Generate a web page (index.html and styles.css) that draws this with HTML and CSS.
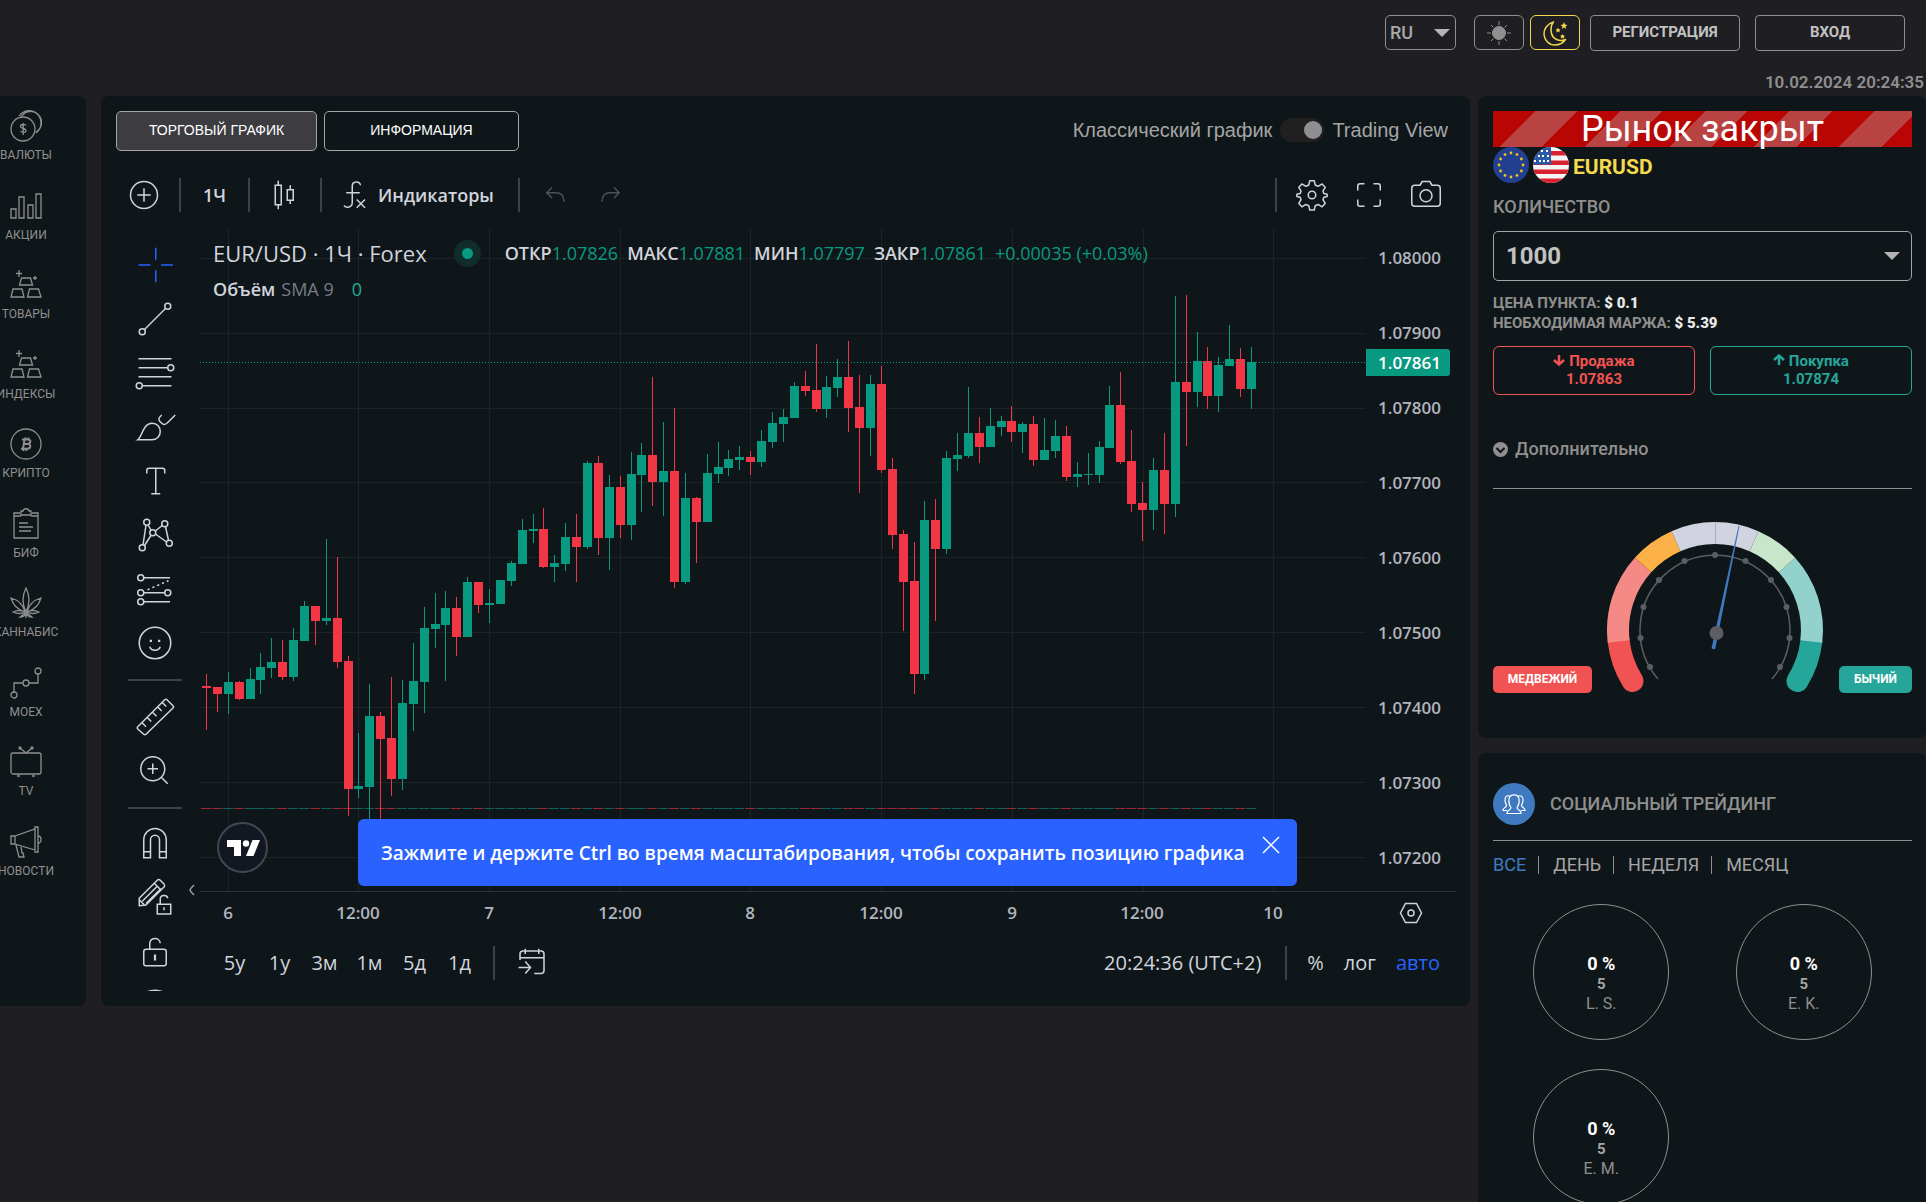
FILE: index.html
```html
<!DOCTYPE html>
<html lang="ru">
<head>
<meta charset="utf-8">
<meta name="viewport" content="width=device-width, initial-scale=1">
<title>EURUSD — торговый график</title>
<link rel="stylesheet" href="styles.css">
</head>
<body>
<header class="topbar">
  <div class="topbar-actions">
    <div class="lang"><select class="lang-select" aria-label="Язык"><option>RU</option><option>EN</option></select></div>
    <div class="theme">
      <button class="theme-btn" type="button" aria-label="Светлая тема">
        <svg width="26" height="26" viewBox="0 0 26 26" fill="none" stroke="currentColor" stroke-width="1"><circle cx="13" cy="13" r="6.500" fill="currentColor"/><path d="M13 1v4M13 21v4M1 13h4M21 13h4M5 5l2.500 2.500M18.500 18.500L21 21M5 21l2.500-2.500M18.500 7.500L21 5"/></svg>
      </button>
      <button class="theme-btn theme-btn-active" type="button" aria-label="Тёмная тема">
        <svg width="26" height="26" viewBox="0 0 26 26" fill="none" stroke="currentColor" stroke-width="1.500"><path d="M11.500 2C5 4 1.500 9 2 14.500 2.500 20.500 7 25 13 25c4.500 0 8-2 10.500-5.500C17 22 11 19 9.500 13.500 8.500 9 9 5 11.500 2z" stroke-linejoin="round"/><path d="M22 2l1 2.500 2.500.5-2 1.500.5 2.500-2-1.500L20 9l.5-2.500-2-1.500 2.500-.5zM16 7.500l.8 1.700 1.700.3-1.200 1.200.3 1.800-1.600-1-1.600 1 .3-1.800-1.200-1.200 1.700-.3zM20.500 14l.8 1.500 1.700.3-1.200 1.200.2 1.700-1.500-.9-1.500.9.2-1.700-1.200-1.200 1.700-.3z" fill="currentColor" stroke="none"/></svg>
      </button>
    </div>
    <button class="auth-btn" type="button">РЕГИСТРАЦИЯ</button>
    <button class="auth-btn auth-login" type="button">ВХОД</button>
  </div>
  <time class="clock">10.02.2024 20:24:35</time>
</header>

<div class="layout">
  <nav class="markets" aria-label="Рынки">
    <ul class="market-list">
      <li><a class="market" href="#fx"><svg class="market-icon" viewBox="0 0 32 32"><circle cx="13" cy="19" r="12"/><path d="M11 7a11 11 0 1 1 15 15M9 6A12 12 0 0 1 31 13c0 4-1.500 7.500-5 10"/><path d="M16 15.500c-1-1.500-5.500-1.500-5.500 1s5.500 1.500 5.500 4-4.500 2.500-5.500.5M13.200 13v12"/></svg>ВАЛЮТЫ</a></li>
      <li><a class="market" href="#stocks"><svg class="market-icon" viewBox="0 0 32 32"><path d="M1 19h5v9H1zM9 7h5v21H9zM18 15h5v13h-5zM26 4h5v24h-5z"/></svg>АКЦИИ</a></li>
      <li><a class="market" href="#goods"><svg class="market-icon" viewBox="0 0 32 32"><path d="M11.500 9h9l2 7h-13zM3 20h9l2 8H1zM19.500 20h9l2.500 8H17.500zM9 1v7M6 4.500h6M25 7v4M23 9h4"/></svg>ТОВАРЫ</a></li>
      <li><a class="market" href="#indices"><svg class="market-icon" viewBox="0 0 32 32"><path d="M11.500 9h9l2 7h-13zM3 20h9l2 8H1zM19.500 20h9l2.500 8H17.500zM9 1v7M6 4.500h6M25 7v4M23 9h4"/></svg>ИНДЕКСЫ</a></li>
      <li><a class="market" href="#crypto"><svg class="market-icon" viewBox="0 0 32 32"><circle cx="16" cy="16" r="15"/><path stroke-width="2" d="M12 11.500h6c3.500 0 3 4-.5 4.300 4 .2 3.500 5-.5 5h-6M14.500 11.500L13 20.800M14 16h4M15.500 9.500l-.3 2M18.500 9.500l-.3 2M13.500 21l-.3 2M16.500 21l-.3 2"/></svg>КРИПТО</a></li>
      <li><a class="market" href="#etf"><svg class="market-icon" viewBox="0 0 32 32"><path d="M10 5H4v25h24V5h-6M4 8h7M21 8h7M11 3h2c0-3 6-3 6 0h2v4H11zM9 15h9M9 19h14M9 23h12"/></svg>БИФ</a></li>
      <li><a class="market" href="#cannabis"><svg class="market-icon" viewBox="0 0 32 32"><path d="M16 1c-4 8-4 16 0 24 4-8 4-16 0-24zM1 11c2 7 7 12 14 14-2-8-7-12-14-14zM31 11c-2 7-7 12-14 14 2-8 7-12 14-14zM15 25c-4-2-8-2-12 0 4 2 8 2 12 0zM17 25c4-2 8-2 12 0-4 2-8 2-12 0zM15 26l-5 4c3 0 5-1 6-4 1 3 3 4 6 4l-5-4M16 26v5"/></svg>КАННАБИС</a></li>
      <li><a class="market" href="#moex"><svg class="market-icon" viewBox="0 0 32 32"><circle cx="4" cy="28" r="3"/><circle cx="16" cy="16" r="3"/><circle cx="28" cy="4" r="3"/><path d="M4 25v-9h9M19 16h9V7"/></svg>MOEX</a></li>
      <li><a class="market" href="#tv"><svg class="market-icon" viewBox="0 0 32 32"><rect x="1" y="7" width="30" height="21" rx="2"/><path d="M10 2l6 5 6-5M7 30h3M22 30h3"/><circle cx="10" cy="2" r="1"/><circle cx="22" cy="2" r="1"/></svg>TV</a></li>
      <li><a class="market" href="#news"><svg class="market-icon" viewBox="0 0 32 32"><path d="M5 10L25 3v21L5 18zM25 1h3v25h-3zM28 10c4 0 4 7 0 7M1 10h4v8H1zM6 19l3 12h5l-1-4h-1l-1-6"/></svg>НОВОСТИ</a></li>
    </ul>
  </nav>

  <main class="trade">
    <div class="trade-head">
      <div class="view-tabs">
        <button class="view-tab view-tab-active" type="button">ТОРГОВЫЙ ГРАФИК</button>
        <button class="view-tab" type="button">ИНФОРМАЦИЯ</button>
      </div>
      <label class="chart-mode">Классический график <input class="switch" type="checkbox" checked> Trading View</label>
    </div>

    <div class="chart-toolbar">
      <button class="tool-btn" type="button" aria-label="Сравнить"><svg class="icon" viewBox="0 0 28 28"><circle cx="14" cy="14" r="9"/><path d="M14 9.500v9M9.500 14h9"/></svg></button>
      <span class="divider"></span>
      <button class="text-btn interval" type="button">1Ч</button>
      <span class="divider"></span>
      <button class="tool-btn" type="button" aria-label="Свечи"><svg class="icon" viewBox="0 0 28 28"><path d="M7.500 7.500h4v13h-4zM9.500 4.500v3M9.500 20.500v3M15.500 10.500h4v7h-4zM17.500 7.500v3M17.500 17.500v2.500"/></svg></button>
      <span class="divider"></span>
      <button class="text-btn indicators" type="button"><svg class="icon" viewBox="0 0 28 28"><path d="M19 7.500c-.5-3-5.500-3-5.500.5v11c0 3.500-4 4-5.500 2M9.500 12.500h9M16.500 17l5.500 5.500M22 17l-5.500 5.500"/></svg>Индикаторы</button>
      <span class="divider"></span>
      <button class="tool-btn history" type="button" aria-label="Отменить" disabled><svg class="icon" viewBox="0 0 28 28"><path d="M12 9l-3.500 3.500L12 16M8.500 12.500h6c3.500 0 5.500 2 5.500 6"/></svg></button>
      <button class="tool-btn history" type="button" aria-label="Повторить" disabled><svg class="icon" viewBox="0 0 28 28"><path d="M16 9l3.500 3.500L16 16M19.500 12.500h-6c-3.500 0-5.500 2-5.500 6"/></svg></button>
      <span class="divider divider-end"></span>
      <button class="tool-btn wide" type="button" aria-label="Настройки"><svg class="icon" viewBox="0 0 28 28"><circle cx="14" cy="14" r="2.500"/><path stroke-linejoin="round" d="M12.500 4.500h3l.6 2.800 2 .9 2.600-1.600 2.100 2.300-1.500 2.500.6 1.600 2.200.5v1.500l-2.200.5-.6 1.600 1.500 2.500-2.100 2.300-2.600-1.600-2 .9-.6 2.800h-3l-.6-2.800-2-.9-2.600 1.600-2.100-2.300 1.500-2.500-.6-1.600-2.200-.5v-1.500l2.200-.5.6-1.600-1.500-2.500 2.100-2.300 2.600 1.600 2-.9z"/></svg></button>
      <button class="tool-btn wide" type="button" aria-label="На весь экран"><svg class="icon" viewBox="0 0 28 28"><path d="M11 6.500H8A1.500 1.500 0 0 0 6.500 8v3M17 6.500h3A1.500 1.500 0 0 1 21.500 8v3M11 21.500H8A1.500 1.500 0 0 1 6.500 20v-3M17 21.500h3a1.500 1.500 0 0 0 1.500-1.500v-3"/></svg></button>
      <button class="tool-btn wide" type="button" aria-label="Снимок"><svg class="icon" viewBox="0 0 28 28"><circle cx="14" cy="14.500" r="4"/><path stroke-linejoin="round" d="M11.500 5h5l1.500 2.500h3.500a2 2 0 0 1 2 2v10a2 2 0 0 1-2 2h-15a2 2 0 0 1-2-2v-10a2 2 0 0 1 2-2H10z"/></svg></button>
    </div>

    <div class="chart-body">
      <div class="draw-tools">
        <button class="draw-btn draw-active" type="button" aria-label="Курсор"><svg class="icon" viewBox="0 0 28 28"><path d="M14.500 2.500v8M14.500 17.500v8M3 14h8M18 14h8"/></svg></button>
        <button class="draw-btn" type="button" aria-label="Линия тренда"><svg class="icon" viewBox="0 0 28 28"><circle cx="5.500" cy="22.500" r="2"/><circle cx="22.500" cy="5.500" r="2"/><path d="M7 21L21 7"/></svg></button>
        <button class="draw-btn" type="button" aria-label="Коррекция"><svg class="icon" viewBox="0 0 28 28"><path d="M3 4.500h22M3 10.500h19.500M3 16.500h22M5.500 22.500H25"/><circle cx="24.500" cy="10.500" r="2"/><circle cx="3.500" cy="22.500" r="2"/></svg></button>
        <button class="draw-btn" type="button" aria-label="Кисть"><svg class="icon" viewBox="0 0 28 28"><path d="M2.500 22.500c3-2 3.500-11 9.500-11 3.500 0 5.500 2.500 5.500 5.500s-2 5.500-5.500 5.500zM18.500 6c-3 2.500-2 4 0 5.500 1.500 1.500 2.500 1 4-.5L27.500 6"/></svg></button>
        <button class="draw-btn" type="button" aria-label="Текст"><svg class="icon" viewBox="0 0 28 28"><path d="M8.500 9V7c0-1 .5-1.500 1.500-1.500h9c1 0 1.500.5 1.500 1.500v2M14.500 5.500v17M11.500 22.500h6"/></svg></button>
        <button class="draw-btn" type="button" aria-label="Паттерны"><svg class="icon" viewBox="0 0 28 28"><circle cx="8.500" cy="5.500" r="2"/><circle cx="20.500" cy="6.500" r="2"/><circle cx="12.500" cy="12.500" r="2"/><circle cx="23.500" cy="19.500" r="2"/><circle cx="5.500" cy="22.500" r="2"/><path d="M6 20.500L8 7.500M9.500 7.500l2 3.500M14 11.500l5-4M21 8.500l2 9M14.500 13.500l7 5M7 21l4.500-7"/></svg></button>
        <button class="draw-btn" type="button" aria-label="Прогноз"><svg class="icon" viewBox="0 0 28 28"><path d="M6.500 6.500H24M6.500 16.500h14M6.500 22.500H24"/><path d="M9 14.500l14-6" stroke-dasharray="1.500 2"/><circle cx="4.500" cy="6.500" r="2"/><circle cx="4.500" cy="16.500" r="2"/><circle cx="22.500" cy="16.500" r="2"/><circle cx="4.500" cy="22.500" r="2"/></svg></button>
        <button class="draw-btn" type="button" aria-label="Эмодзи"><svg class="icon" viewBox="0 0 28 28"><circle cx="14" cy="14" r="10.500"/><path d="M10.500 16.500c1 3 6 3 7 0"/><path d="M10.500 12.500h1.500M16 12.500h1.500" stroke-width="1.500"/></svg></button>
        <hr class="draw-sep">
        <button class="draw-btn" type="button" aria-label="Измерить"><svg class="icon" viewBox="0 0 28 28"><path stroke-linejoin="round" d="M2.500 20.500l18-18c.5-.5 1-.5 1.500 0L26 6.500c.5.5.5 1 0 1.500L8 25.500c-.5.500-1 .5-1.500 0L2.500 22c-.5-.5-.5-1 0-1.500zM5.500 18l2.500 2.500M9 14.500l2.500 2.500M12.500 11l2.500 2.500M16 7.500l2.500 2.500M19 4.500L21.500 7"/></svg></button>
        <button class="draw-btn" type="button" aria-label="Увеличить"><svg class="icon" viewBox="0 0 28 28"><circle cx="12.500" cy="12.500" r="8"/><path d="M18.500 18.500l4 4M12.500 9v7M9 12.500h7"/></svg></button>
        <hr class="draw-sep">
        <button class="draw-btn" type="button" aria-label="Магнит"><svg class="icon" viewBox="0 0 28 28"><path d="M6.500 22.500v-12a7.500 7.500 0 0 1 15 0v12h-4.500v-12a3 3 0 0 0-6 0v12zM6.500 18.500h4.500M17 18.500h4.500"/></svg></button>
        <button class="draw-btn" type="button" aria-label="Режим рисования"><svg class="icon" viewBox="0 0 28 28"><path stroke-linejoin="round" d="M3.500 18.500v-5l12-12c.5-.5 1.500-.5 2 0l2.500 2.500c.5.500.5 1.500 0 2l-12 12zM5.500 15.500l10-10M8 17L18 7M13.500 3.500l4.500 4.500M3.500 14.500l4 4"/><path d="M15.500 17.500h9v6.500h-9zM17.500 17.500v-3.500c0-3 4.500-3 5-.5M20 19.500v2"/></svg></button>
        <button class="draw-btn" type="button" aria-label="Заблокировать"><svg class="icon" viewBox="0 0 28 28"><rect x="6.500" y="11.500" width="15" height="11" rx="1.500"/><path d="M10.500 11.500v-3.500c0-4.500 6.500-5 7-.5"/><path stroke-width="1.500" d="M14 15v4"/></svg></button>
        <button class="draw-btn" type="button" aria-label="Скрыть"><svg class="icon" viewBox="0 0 28 28"><path d="M3 9.500c4-9 18-9 22 0-4 9-18 9-22 0z"/><circle cx="14" cy="9.500" r="3"/></svg></button>
      </div>

      <div class="chart-pane">
        <div class="plot">
          <svg class="plot-svg" viewBox="200 229 1256 701">
            <path class="grid" d="M200 258.500h1166M200 333.500h1166M200 408.500h1166M200 482.500h1166M200 557.500h1166M200 632.500h1166M200 707.500h1166M200 782.500h1166M200 857.500h1166M228.500 229v662M358.500 229v662M489.500 229v662M620.500 229v662M750.500 229v662M881.500 229v662M1012.500 229v662M1143.500 229v662M1273.500 229v662"/>
            <path class="axis" d="M200 891.500h1256"/>
            <g id="candles" shape-rendering="crispEdges"></g>
            <path class="last-price" d="M200 362.500h1166"/>
            <g class="price-labels">
              <text x="1378" y="264">1.08000</text><text x="1378" y="339">1.07900</text><text x="1378" y="414">1.07800</text><text x="1378" y="489">1.07700</text><text x="1378" y="564">1.07600</text><text x="1378" y="639">1.07500</text><text x="1378" y="714">1.07400</text><text x="1378" y="789">1.07300</text><text x="1378" y="864">1.07200</text>
            </g>
            <path class="price-tag" d="M1366 349h81a3 3 0 0 1 3 3v21a3 3 0 0 1-3 3h-81z"/>
            <text class="price-tag-text" x="1378" y="369">1.07861</text>
            <g class="time-labels">
              <text x="228" y="919">6</text><text x="358" y="919">12:00</text><text x="489" y="919">7</text><text x="620" y="919">12:00</text><text x="750" y="919">8</text><text x="881" y="919">12:00</text><text x="1012" y="919">9</text><text x="1142" y="919">12:00</text><text x="1273" y="919">10</text>
            </g>
            <g class="axis-gear"><path d="M1405.500 903.500h11l5 9.500-5 9.500h-11l-5-9.500z"/><circle cx="1411" cy="913" r="3"/></g>
          </svg>
          <div class="legend">
            <div class="legend-row">
              <span class="legend-title">EUR/USD · 1Ч · Forex</span>
              <span class="status"></span>
              <span class="ohlc">ОТКР<b>1.07826</b></span>
              <span class="ohlc">МАКС<b>1.07881</b></span>
              <span class="ohlc">МИН<b>1.07797</b></span>
              <span class="ohlc">ЗАКР<b>1.07861</b></span>
              <span class="ohlc"><b>+0.00035 (+0.03%)</b></span>
            </div>
            <div class="legend-row legend-volume"><span>Объём</span><span class="muted">SMA 9</span><span class="volume">0</span></div>
          </div>
          <a class="tv-logo" href="#tradingview" aria-label="TradingView"><svg width="34" height="18" viewBox="0 0 34 18" fill="#fff"><path d="M1 1h14v16H8V8H1zM26.500 1H34l-6.500 16H20z"/><circle cx="20" cy="4.500" r="3.200"/></svg></a>
          <div class="toast" role="status">
            <span>Зажмите и держите Ctrl во время масштабирования, чтобы сохранить позицию графика</span>
            <button class="toast-close" type="button" aria-label="Закрыть"><svg width="18" height="18" viewBox="0 0 18 18" fill="none" stroke="#fff" stroke-width="1.500"><path d="M1 1l16 16M17 1L1 17"/></svg></button>
          </div>
          <button class="collapse" type="button" aria-label="Скрыть панель"><svg width="6" height="12" viewBox="0 0 6 12" fill="none" stroke="#9aa3aa" stroke-width="1.500"><path d="M5 1Q1 5 1 6t4 5"/></svg></button>
        </div>
        <div class="chart-footer">
          <button class="range" type="button">5y</button>
          <button class="range" type="button">1y</button>
          <button class="range" type="button">3м</button>
          <button class="range" type="button">1м</button>
          <button class="range" type="button">5д</button>
          <button class="range" type="button">1д</button>
          <span class="divider"></span>
          <button class="tool-btn" type="button" aria-label="Перейти к дате"><svg class="icon" viewBox="0 0 28 28"><path d="M6 12V8c0-1 .5-2 2-2h12c1.500 0 2 1 2 2v11c0 1-.5 2-2 2h-4.500M6 10.500h16M9.500 4.500V8M18.500 4.500V8M5 17h7.500M9.500 13l3.500 4-3.500 4"/></svg></button>
          <span class="footer-time">20:24:36 (UTC+2)</span>
          <span class="divider"></span>
          <button class="scale" type="button">%</button>
          <button class="scale" type="button">лог</button>
          <button class="scale scale-active" type="button">авто</button>
        </div>
      </div>
    </div>
  </main>

  <aside class="side">
    <section class="card order">
      <div class="closed">Рынок закрыт</div>
      <div class="symbol">
        <svg width="36" height="36" viewBox="0 0 36 36" fill="#f2c71c"><circle cx="18" cy="18" r="18" fill="#233f8f"/><circle cx="18" cy="6" r="1.400"/><circle cx="24" cy="7.600" r="1.400"/><circle cx="28.400" cy="12" r="1.400"/><circle cx="30" cy="18" r="1.400"/><circle cx="28.400" cy="24" r="1.400"/><circle cx="24" cy="28.400" r="1.400"/><circle cx="18" cy="30" r="1.400"/><circle cx="12" cy="28.400" r="1.400"/><circle cx="7.600" cy="24" r="1.400"/><circle cx="6" cy="18" r="1.400"/><circle cx="7.600" cy="12" r="1.400"/><circle cx="12" cy="7.600" r="1.400"/></svg>
        <svg width="36" height="36" viewBox="0 0 36 36"><clipPath id="round"><circle cx="18" cy="18" r="18"/></clipPath><g clip-path="url(#round)"><path fill="#f4f4f4" d="M0 0h36v36H0z"/><path fill="#d9202e" d="M0 4h36v4.500H0zM0 13.500h36V18H0zM0 22.500h36V27H0zM0 31.500h36V36H0z"/><path fill="#275aa8" d="M0 0h18v17.500H0z"/><path fill="#fff" d="M8 3h2v2H8zM13 3h2v2h-2zM5 8h2v2H5zM9 8h2v2H9zM14 8h2v2h-2zM1 13h2v2H1zM6 13h2v2H6zM10 13h2v2h-2zM14 13h2v2h-2z"/></g></svg>
        <span class="symbol-name">EURUSD</span>
      </div>
      <label class="field-label" for="amount">КОЛИЧЕСТВО</label>
      <div class="amount"><select class="amount-select" id="amount"><option>1000</option><option>10000</option></select></div>
      <p class="terms">ЦЕНА ПУНКТА: <b>$ 0.1</b><br>НЕОБХОДИМАЯ МАРЖА: <b>$ 5.39</b></p>
      <div class="deal">
        <button class="deal-btn sell" type="button"><span><svg class="arrow" viewBox="0 0 12 12"><path d="M6 1v9M1 6l5 4.500L11 6"/></svg> Продажа</span><span>1.07863</span></button>
        <button class="deal-btn buy" type="button"><span><svg class="arrow" viewBox="0 0 12 12"><path d="M6 11V2M1 6l5-4.500L11 6"/></svg> Покупка</span><span>1.07874</span></button>
      </div>
      <button class="more" type="button"><svg width="15" height="15" viewBox="0 0 15 15"><circle cx="7.500" cy="7.500" r="7.500" fill="currentColor"/><path d="M3.500 6l4 4 4-4" fill="none" stroke="#0f1619" stroke-width="2"/></svg>Дополнительно</button>
      <div class="mood">
        <span class="badge bear">МЕДВЕЖИЙ</span>
        <svg class="gauge" width="218" height="172" viewBox="-108 -109 218 172" fill="none">
          <g stroke-width="22">
            <path stroke="#f15353" stroke-linecap="round" d="M-82.500 51A97 97 0 0 1 -96.300 11.500"/>
            <path stroke="#26a69a" stroke-linecap="round" d="M82.500 51A97 97 0 0 0 96.300 11.500"/>
            <path stroke="#f58986" d="M-96.300 11.500A97 97 0 0 1 -72 -65"/>
            <path stroke="#93d2cc" d="M96.300 11.500A97 97 0 0 0 72 -65"/>
            <path stroke="#fbb048" d="M-72 -65A97 97 0 0 1 -39 -88.800"/>
            <path stroke="#c8e6c9" d="M72 -65A97 97 0 0 0 39 -88.800"/>
            <path stroke="#d1d4e0" d="M-39 -88.800A97 97 0 0 1 39 -88.800"/>
          </g>
          <path stroke="#a9abb5" d="M.5 -108v22"/>
          <path stroke="#5d5e63" stroke-width="1.500" d="M-57 49A75 75 0 1 1 57 49"/>
          <g fill="#5d5e63"><circle cx="-65" cy="37" r="3"/><circle cx="-74.500" cy="8" r="3"/><circle cx="-71.500" cy="-23" r="3"/><circle cx="-56" cy="-50" r="3"/><circle cx="-30.500" cy="-69" r="3"/><circle cx="0" cy="-75" r="3"/><circle cx="30.500" cy="-69" r="3"/><circle cx="56" cy="-50" r="3"/><circle cx="71.500" cy="-23" r="3"/><circle cx="74.500" cy="8" r="3"/><circle cx="65" cy="37" r="3"/></g>
          <path fill="#3f7ac1" d="M-3.500 18.500l3.600.8L24.500 -104l-1-.2z"/>
          <circle cx="1.500" cy="3" r="7" fill="#5d5e63"/>
        </svg>
        <span class="badge bull">БЫЧИЙ</span>
      </div>
    </section>

    <section class="card social">
      <h2 class="social-title"><span class="social-icon"><svg width="24" height="22" viewBox="0 0 24 22" fill="none" stroke="#fff" stroke-width="1.200"><path d="M5 20.500c-.5-4 4-3 4-6C7 12 6.500 10 7 6c.8-5.500 9.200-5.500 10 0 .5 4 0 6-2 8.500 0 3 4.500 2 4 6zM8 3C4.500 2 2.500 4 3 8c.2 2 1 3 1.500 4 .5 3-3.500 2-3.500 5.500h4M16 3c3.500-1 5.500 1 5 5-.2 2-1 3-1.500 4-.5 3 3.500 2 3.500 5.500h-4"/></svg></span>СОЦИАЛЬНЫЙ ТРЕЙДИНГ</h2>
      <div class="periods">
        <a class="period period-active" href="#all">ВСЕ</a>
        <a class="period" href="#day">ДЕНЬ</a>
        <a class="period" href="#week">НЕДЕЛЯ</a>
        <a class="period" href="#month">МЕСЯЦ</a>
      </div>
      <div class="traders">
        <div class="trader"><strong class="profit">0 %</strong><b class="count">5</b><span>L. S.</span></div>
        <div class="trader"><strong class="profit">0 %</strong><b class="count">5</b><span>E. K.</span></div>
        <div class="trader"><strong class="profit">0 %</strong><b class="count">5</b><span>E. M.</span></div>
      </div>
    </section>
  </aside>
</div>
<script src="chart.js"></script>
</body>
</html>
```

FILE: styles.css
```css
:root {
  --page: #1e1e23;
  --panel: #0f1619;
  --line: #8f8f8f;
  --muted: #8f8f8f;
  --text: #c2c2c2;
  --up: #089981;
  --down: #f23645;
  --chart-text: #d1d4dc;
  --chart-font: "Trebuchet MS", "Open Sans", "Noto Sans", sans-serif;
}

* { box-sizing: border-box; }

html { scrollbar-width: none; }

body {
  margin: 0;
  background: var(--page);
  color: var(--muted);
  font: 16px/20px Roboto, sans-serif;
  overflow-x: hidden;
}

button, select {
  margin: 0;
  padding: 0;
  border: 0;
  background: none;
  color: inherit;
  font: inherit;
}

a { color: inherit; text-decoration: none; }
svg { display: block; flex: none; }

/* Top bar */
.topbar { height: 96px; padding-top: 15px; }
.topbar-actions { display: flex; justify-content: flex-end; padding-right: 21px; height: 36px; align-items: flex-start; }

.lang { position: relative; width: 71px; margin-right: 18px; }
.lang-select {
  appearance: none;
  width: 100%;
  height: 35px;
  padding: 0 4px;
  border: 1px solid var(--line);
  border-radius: 5px;
  color: #a9a9a9;
  font-size: 18px;
  font-weight: 500;
}
.lang::after, .amount::after {
  content: "";
  position: absolute;
  top: 50%;
  right: 6px;
  margin-top: -4px;
  border: solid transparent;
  border-width: 8px 8px 0;
  border-top-color: #b5b5b5;
  pointer-events: none;
}

.theme { display: flex; gap: 6px; margin-right: 10px; }
.theme-btn {
  display: grid;
  place-items: center;
  width: 50px;
  height: 35px;
  border: 1px solid var(--line);
  border-radius: 6px;
}
.theme-btn-active { border-color: #f3d84c; color: #f3d84c; }

.auth-btn {
  width: 150px;
  height: 36px;
  padding-bottom: 2px;
  border: 1px solid var(--line);
  border-radius: 4px;
  color: var(--text);
  font-size: 15px;
  font-weight: 700;
}
.auth-login { margin-left: 15px; }

.clock { display: block; margin-top: 21px; padding-right: 2px; text-align: right; font-size: 17px; font-weight: 600; }

/* Page columns */
.layout { display: flex; align-items: flex-start; }

.markets {
  flex: none;
  align-self: flex-start;
  width: 86px;
  min-height: 910px;
  margin-right: 15px;
  padding-top: 14px;
  border-radius: 0 8px 8px 0;
  background: var(--panel);
  overflow: hidden;
}
.market-list {
  display: grid;
  grid-auto-rows: 1fr;
  width: 86px;
  height: 795px;
  margin: 0 0 0 -17px;
  padding: 0;
  list-style: none;
}
.market {
  display: flex;
  flex-direction: column;
  align-items: center;
  gap: 3px;
  font-size: 12px;
}
.market-icon { width: 32px; height: 32px; fill: none; stroke: currentColor; stroke-width: 1.3; }

.trade {
  flex: 1;
  min-width: 0;
  margin-right: 8px;
  padding: 15px 14px 10px 15px;
  border-radius: 8px;
  background: var(--panel);
}
.trade-head { display: flex; justify-content: space-between; align-items: flex-start; }
.view-tabs { display: flex; gap: 7px; }
.view-tab {
  width: 195px;
  height: 40px;
  padding-bottom: 2px;
  border: 1px solid #a5a5a5;
  border-radius: 5px;
  color: #fff;
  font: 14px/16px "Liberation Sans", Arial, sans-serif;
}
.view-tab-active { width: 201px; background: #3c3c41; }
.chart-mode {
  display: flex;
  align-items: center;
  gap: 8px;
  height: 38px;
  padding-right: 8px;
  color: #a5a5a5;
  font: 20px/24px "Liberation Sans", Arial, sans-serif;
}
.switch {
  appearance: none;
  display: flex;
  justify-content: flex-end;
  align-items: center;
  width: 44px;
  height: 24px;
  margin: 0;
  padding: 0 2px;
  border-radius: 12px;
  background: #211f20;
}
.switch::before { content: ""; width: 18px; height: 18px; border-radius: 50%; background: #8f8f92; }

/* Chart */
.icon { width: 42px; height: 42px; fill: none; stroke: currentColor; stroke-width: 1; }
.divider { flex: none; width: 2px; height: 34px; background: #3f424c; }

.chart-toolbar {
  display: flex;
  align-items: center;
  height: 52px;
  margin: 18px 0 8px;
  padding: 0 2px 0 7px;
  color: var(--chart-text);
  font: 600 18px/24px var(--chart-font);
}
.tool-btn { display: grid; place-items: center; flex: none; width: 42px; height: 42px; }
.tool-btn + .divider { margin-left: 14px; }
.interval { width: 67px; }
.divider + .tool-btn { margin-left: 14px; }
.indicators { display: flex; align-items: center; gap: 4px; padding: 0 24px 0 10px; }
.history { color: #4c5058; margin-right: 14px; }
.chart-toolbar .divider-end { margin: 0 0 0 auto; }
.wide { width: 57px; }
.chart-toolbar .wide { margin-left: 0; }
.chart-toolbar .divider-end + .wide { margin-left: 6px; }

.chart-body { display: grid; grid-template-columns: 78px 1fr; column-gap: 6px; }
.draw-tools { height: 762px; padding-top: 9px; overflow: hidden; color: var(--chart-text); }
.draw-btn { display: grid; place-items: center; width: 78px; height: 54px; }
.draw-active { color: #2962ff; }
.draw-sep { width: 54px; height: 2px; margin: 9px auto; border: 0; background: #3f424c; }

.chart-pane { min-width: 0; font-family: var(--chart-font); color: var(--chart-text); }
.plot { position: relative; }
.plot-svg { width: 100%; height: auto; }
.grid { stroke: #1d2427; }
.axis { stroke: #2d3236; }
.last-price { stroke: var(--up); stroke-dasharray: 1 2; }
.candle-up { fill: var(--up); }
.candle-down { fill: var(--down); }
.vol { opacity: .6; }
.price-labels, .time-labels { fill: #b2b5be; font-size: 17px; font-weight: 600; }
.time-labels { text-anchor: middle; }
.price-tag { fill: var(--up); }
.price-tag-text { fill: #fff; font-size: 17px; font-weight: 600; }
.axis-gear { fill: none; stroke: var(--chart-text); stroke-width: 1.5; }

.legend { position: absolute; top: 9px; left: 13px; font-size: 18px; font-weight: 600; line-height: 30px; }
.legend-row { display: flex; align-items: center; gap: 9px; white-space: nowrap; }
.legend-title { font-size: 22px; font-weight: 500; margin-right: 18px; }
.status { width: 27px; height: 27px; margin-right: 15px; border: 8px solid #102d2b; border-radius: 50%; background: var(--up); }
.ohlc b { font-weight: 500; color: #089981; }
.legend-volume { margin-top: 6px; gap: 6px; }
.muted { color: #787b86; font-weight: 400; }
.volume { margin-left: 12px; color: #22ab94; font-weight: 500; }

.tv-logo {
  position: absolute;
  bottom: 57px;
  left: 17px;
  display: grid;
  place-items: center;
  width: 51px;
  height: 51px;
  border: 2px solid #434651;
  border-radius: 50%;
  background: #131722;
}
.toast {
  position: absolute;
  bottom: 44px;
  left: 158px;
  display: flex;
  justify-content: space-between;
  align-items: center;
  width: 939px;
  height: 67px;
  padding: 0 17px 0 23px;
  border-radius: 6px;
  background: #2962ff;
  color: #fff;
  font-size: 19px;
  font-weight: 600;
  white-space: nowrap;
}
.toast-close { padding-bottom: 16px; }
.collapse { position: absolute; bottom: 34px; left: -11px; }

.chart-footer {
  display: flex;
  align-items: center;
  height: 66px;
  padding: 0 16px 0 12px;
  font-size: 20px;
  font-weight: 500;
}
.range { width: 45px; }
.chart-footer .range + .divider { margin-left: 11px; }
.chart-footer .tool-btn { margin-left: 16px; }
.footer-time { margin: 0 24px 0 auto; }
.scale { margin-left: 20px; }
.scale-active { color: #2962ff; }

/* Right column */
.side { flex: none; width: 448px; }
.card { padding: 15px 14px 15px 15px; border-radius: 8px; background: var(--panel); }
.order { height: 642px; }
.closed {
  height: 36px;
  background: repeating-linear-gradient(135deg, #b90504 0 30px, #b94342 30px 60px);
  color: #fff;
  font-size: 36px;
  line-height: 36px;
  text-align: center;
}
.symbol { display: flex; align-items: center; gap: 4px; height: 36px; }
.symbol-name { padding-top: 4px; color: #f5d94e; font-size: 21px; font-weight: 700; }
.field-label { display: block; margin-top: 14px; font-size: 18px; font-weight: 500; }
.amount { position: relative; margin-top: 14px; }
.amount-select {
  appearance: none;
  width: 100%;
  height: 50px;
  padding: 0 12px;
  border: 1px solid #a5a5a5;
  border-radius: 5px;
  color: var(--text);
  font-size: 24px;
  font-weight: 700;
}
.amount::after { right: 12px; }
.terms { margin: 12px 0 13px; font-size: 15px; font-weight: 700; }
.terms b { color: #e8e8e8; }
.deal { display: grid; grid-template-columns: 1fr 1fr; gap: 15px; }
.deal-btn {
  display: flex;
  flex-direction: column;
  align-items: center;
  justify-content: center;
  height: 49px;
  padding-bottom: 2px;
  border: 1px solid;
  border-radius: 6px;
  font-size: 15px;
  font-weight: 700;
  line-height: 18px;
}
.sell { color: #f15353; }
.buy { color: #26a69a; }
.arrow { display: inline-block; width: 12px; height: 12px; fill: none; stroke: currentColor; stroke-width: 2.5; }
.more {
  display: flex;
  align-items: center;
  gap: 7px;
  width: 100%;
  margin-top: 43px;
  padding-bottom: 28px;
  border-bottom: 1px solid var(--line);
  font-size: 18px;
  font-weight: 500;
  line-height: 22px;
}
.mood { display: flex; justify-content: space-between; align-items: flex-end; margin-top: 32px; }
.badge {
  width: 99px;
  border-radius: 5px;
  color: #fff;
  font-size: 12px;
  font-weight: 700;
  line-height: 27px;
  text-align: center;
}
.bear { background: #f15353; }
.bull { width: 73px; background: #26a69a; }
.gauge { margin: 0 -20px; }

.social { margin-top: 15px; padding-top: 30px; }
.social-title {
  display: flex;
  align-items: center;
  gap: 15px;
  margin: 0;
  padding-bottom: 15px;
  border-bottom: 1px solid var(--line);
  font-size: 18px;
  font-weight: 500;
}
.social-icon { display: grid; place-items: center; width: 42px; height: 42px; border-radius: 50%; background: #3f7ac1; }
.periods { display: flex; margin-top: 15px; color: #a5a5a5; font-size: 18px; line-height: 18px; }
.period + .period { margin-left: 12px; padding-left: 14px; border-left: 1px solid var(--line); }
.period-active { color: #3f7ac1; }
.traders {
  display: grid;
  grid-template-columns: 1fr 1fr;
  justify-items: center;
  row-gap: 29px;
  padding: 30px 7px 0;
}
.trader {
  display: flex;
  flex-direction: column;
  align-items: center;
  width: 136px;
  height: 136px;
  padding-top: 48px;
  border: 1px solid var(--line);
  border-radius: 50%;
  line-height: 19px;
}
.profit { color: #fff; font-size: 18px; line-height: 22px; }
.count { color: #a5a5a5; font-size: 15px; }
```

FILE: chart.js
```js
// One row per hourly candle: direction (1 up, 0 down), high, body top, body bottom, low.
const candles = [
  [0,674,686,688,730],[0,687,687,694,712],[1,672,682,694,714],[0,681,682,699,700],[1,668,679,699,699],
  [1,653,667,680,694],[1,638,662,668,678],[0,640,662,677,680],[1,628,640,677,681],[1,601,606,641,641],
  [0,606,606,621,645],[1,539,618,621,625],[0,557,618,662,668],[0,656,661,789,816],[1,733,786,789,798],
  [1,684,716,787,825],[0,712,716,739,825],[0,677,738,779,796],[1,680,703,779,790],[1,643,681,704,731],
  [1,607,628,682,713],[1,593,624,629,648],[1,591,608,625,681],[0,597,608,637,656],[1,577,582,637,637],
  [0,582,582,605,613],[1,589,603,605,623],[1,580,580,604,604],[1,561,563,581,586],[1,519,530,564,564],
  [1,514,529,531,543],[0,508,529,567,568],[1,555,563,567,582],[1,523,537,564,571],[0,514,537,547,582],
  [1,461,463,547,549],[0,456,463,538,555],[1,475,487,538,570],[0,476,487,525,538],[1,452,474,525,540],
  [1,443,455,475,512],[0,377,455,482,506],[1,422,471,482,516],[0,408,471,582,588],[1,473,498,582,584],
  [0,497,498,522,563],[1,454,473,522,522],[1,442,467,474,483],[1,450,459,468,476],[1,446,457,460,470],
  [0,451,457,462,475],[1,430,441,462,467],[1,412,423,442,448],[1,409,417,424,442],[1,382,386,418,418],
  [0,371,386,391,396],[0,344,390,409,412],[1,376,387,409,418],[1,359,377,388,397],[0,341,377,408,432],
  [0,375,407,428,493],[1,375,384,428,456],[0,366,384,470,473],[0,458,469,535,549],[0,530,534,582,631],
  [0,542,581,674,694],[1,501,520,674,680],[0,499,520,549,621],[1,451,458,549,554],[1,433,455,459,471],
  [1,387,433,456,458],[0,417,433,447,463],[1,408,426,447,447],[1,416,421,427,436],[0,406,421,432,442],
  [1,422,424,432,453],[0,416,424,460,466],[1,418,450,460,460],[1,420,436,451,458],[0,426,436,477,481],
  [1,462,474,477,487],[1,453,474,475,485],[1,441,447,475,483],[1,386,405,448,448],[0,372,405,462,464],
  [0,430,461,504,512],[0,482,503,510,541],[1,458,470,510,530],[0,433,470,504,534],[1,296,382,504,517],
  [0,295,382,392,446],[1,332,361,392,407],[0,347,361,396,409],[1,357,365,396,412],[1,325,359,366,366],
  [0,348,359,389,397],[1,347,362,389,409]
];

const FIRST_X = 206;
const STEP = 10.885;
const VOLUME_Y = 808;

const layer = document.getElementById('candles');

function addRect(cls, x, y, width, height) {
  const rect = document.createElementNS('http://www.w3.org/2000/svg', 'rect');
  rect.setAttribute('class', cls);
  rect.setAttribute('x', x);
  rect.setAttribute('y', y);
  rect.setAttribute('width', width);
  rect.setAttribute('height', height);
  layer.appendChild(rect);
}

candles.forEach(([up, high, top, bottom, low], i) => {
  const x = Math.round(FIRST_X + STEP * i);
  const cls = up ? 'candle-up' : 'candle-down';
  addRect(cls + ' vol', x - 5, VOLUME_Y, 10, 1);
  addRect(cls, x, high, 1, low - high);
  addRect(cls, x - 4, top, 9, bottom - top);
});
```
